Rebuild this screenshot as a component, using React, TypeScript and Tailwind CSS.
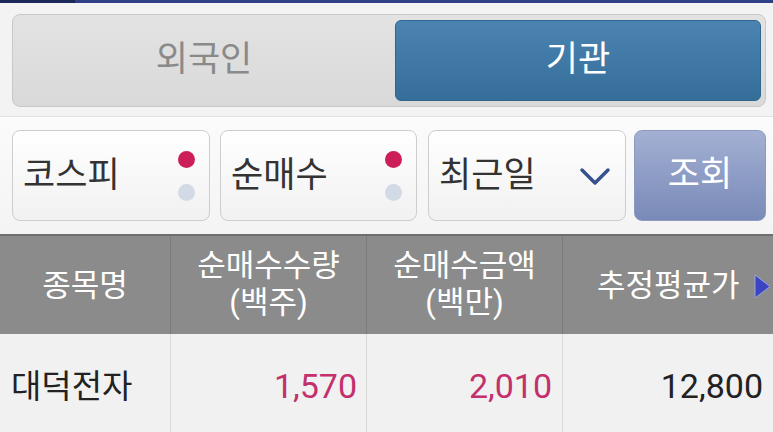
const font = { fontFamily: 'Roboto, "Noto Sans CJK KR", sans-serif' }

function Dots() {
  return (
    <div className="flex flex-col items-center gap-[16px] mr-[14px]">
      <span className="block w-[17px] h-[17px] rounded-full bg-[#cc1f5a]" />
      <span className="block w-[17px] h-[17px] rounded-full bg-[#d2dae5]" />
    </div>
  )
}

interface BoxProps {
  label: string
  width: string
  children?: React.ReactNode
}

function SelectBox({ label, width, children }: BoxProps) {
  return (
    <div
      className={`${width} h-[91px] flex items-center justify-between rounded-[8px] border border-[#cdcdcd] bg-gradient-to-b from-[#ffffff] to-[#f1f1f1]`}
    >
      <span className="pl-[10px] text-[35px] leading-none text-[#333333]">{label}</span>
      {children}
    </div>
  )
}

export default function App() {
  return (
    <div className="w-[773px] h-[432px] overflow-hidden bg-[#f2f2f2]" style={font}>
      {/* top strip */}
      <div className="flex h-[3px]">
        <div className="w-[75px] bg-[#1c2858]" />
        <div className="flex-1 bg-[#2f4086]" />
      </div>

      {/* segmented control */}
      <div className="h-[114px] pt-[11px] pl-[12px] pr-[7px] border-b border-[#e2e2e2] bg-[#f3f3f3]">
        <div className="h-[93px] flex rounded-[8px] border border-[#c8c8c8] bg-gradient-to-b from-[#e3e3e3] to-[#d9d9d9] py-[5px] pr-[4px]">
          <div className="w-[382px] flex items-center justify-center text-[35px] text-[#8a8a8a]">
            외국인
          </div>
          <div className="flex-1 flex items-center justify-center rounded-[6px] border border-[#2f6590] bg-gradient-to-b from-[#4b84b1] to-[#356e99] text-[35px] text-white">
            기관
          </div>
        </div>
      </div>

      {/* filters */}
      <div className="h-[117px] flex pt-[13px] pl-[12px] pr-[7px] bg-gradient-to-b from-[#fbfbfb] to-[#f4f4f4]">
        <SelectBox label="코스피" width="w-[198px]">
          <Dots />
        </SelectBox>
        <div className="w-[10px]" />
        <SelectBox label="순매수" width="w-[197px]">
          <Dots />
        </SelectBox>
        <div className="w-[11px]" />
        <SelectBox label="최근일" width="w-[198px]">
          <svg width="32" height="20" viewBox="0 0 32 20" className="mr-[14px] mt-[2px]">
            <path d="M3 3 L16 16 L29 3" fill="none" stroke="#38508e" strokeWidth="3.5" strokeLinecap="round" strokeLinejoin="round" />
          </svg>
        </SelectBox>
        <div className="w-[8px]" />
        <div className="flex-1 h-[91px] flex items-center justify-center rounded-[8px] border border-[#8c9ac2] bg-gradient-to-b from-[#a3b0d3] to-[#7a8ab8] text-[35px] text-white">
          조회
        </div>
      </div>

      {/* table header */}
      <div className="h-[100px] flex border-t-2 border-[#6f6f6f] bg-[#8b8b8b] text-white text-[31px] leading-[37px]">
        <div className="w-[171px] flex items-center justify-center border-r border-[#7c7c7c]">종목명</div>
        <div className="w-[196px] flex flex-col items-center justify-center text-center border-r border-[#7c7c7c] pb-[2px]">
          <span>순매수수량</span>
          <span>(백주)</span>
        </div>
        <div className="w-[196px] flex flex-col items-center justify-center text-center border-r border-[#7c7c7c] pb-[2px]">
          <span>순매수금액</span>
          <span>(백만)</span>
        </div>
        <div className="flex-1 flex items-center pl-[34px] gap-[14px]">
          <span>추정평균가</span>
          <svg width="17" height="25" viewBox="0 0 17 25" className="mt-[2px] shrink-0">
            <path d="M1 1 L16 12.5 L1 24 Z" fill="#3b45c4" stroke="#9aa0e0" strokeWidth="1" />
          </svg>
        </div>
      </div>

      {/* data row */}
      <div className="h-[98px] flex bg-[#f1f1f1] text-[34px] leading-none">
        <div className="w-[171px] flex items-center pl-[11px] pt-[6px] border-r border-[#d9d9d9] text-[33px] text-[#222222]">
          대덕전자
        </div>
        <div className="w-[196px] flex items-center justify-end pr-[9px] pt-[6px] border-r border-[#d9d9d9] text-[#c3306b]">
          1,570
        </div>
        <div className="w-[196px] flex items-center justify-end pr-[10px] pt-[6px] border-r border-[#d9d9d9] text-[#c3306b]">
          2,010
        </div>
        <div className="flex-1 flex items-center justify-end pr-[10px] pt-[6px] text-[#222222]">
          12,800
        </div>
      </div>
    </div>
  )
}
